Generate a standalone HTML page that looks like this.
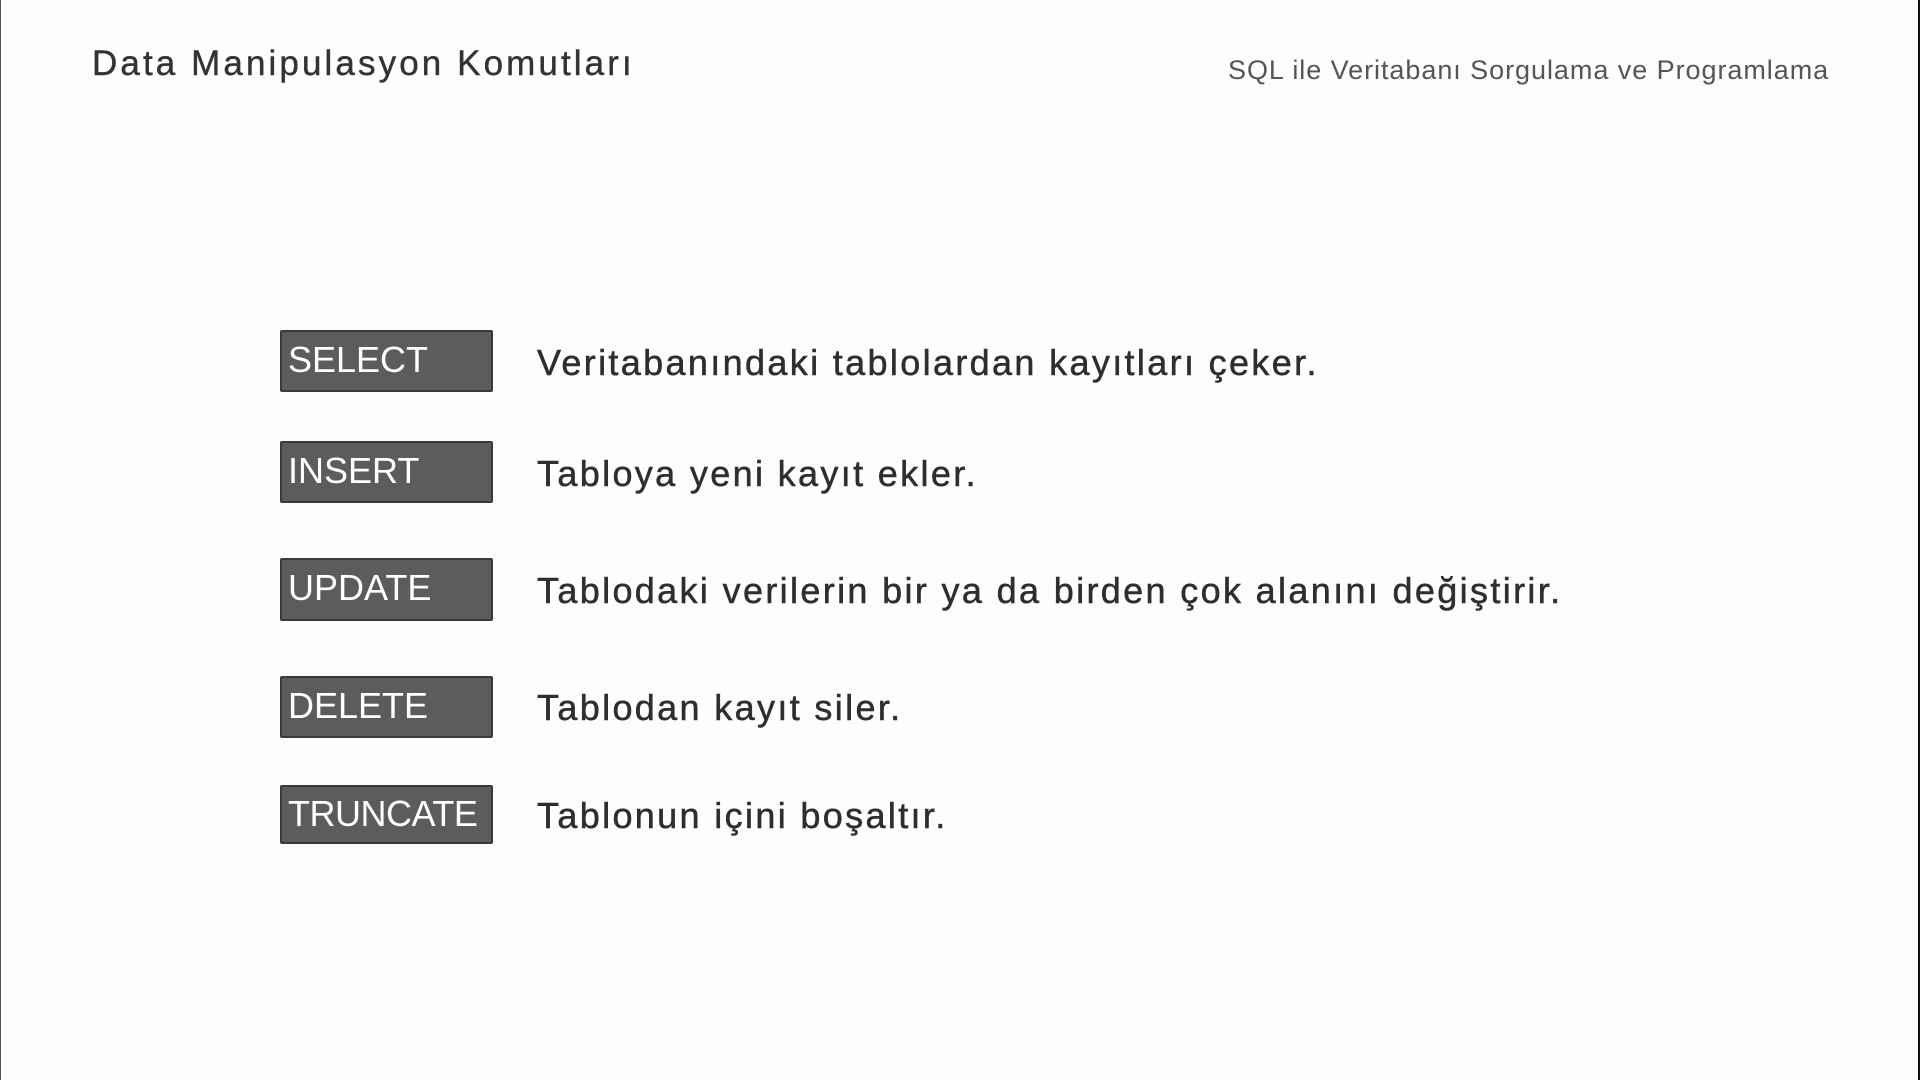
<!DOCTYPE html>
<html><head><meta charset="utf-8"><style>
html,body{margin:0;padding:0;width:1920px;height:1080px;background:#fdfdfd;overflow:hidden;font-family:"Liberation Sans",sans-serif;}
.l{position:absolute;left:0;top:0;width:1px;height:1080px;background:#555}
.r{position:absolute;right:0;top:0;width:2px;height:1080px;background:#111}
.t{position:absolute;left:92px;top:44px;font-size:35px;color:#333;letter-spacing:3.1px;-webkit-text-stroke:0.4px #333}
.s{position:absolute;left:1228px;top:55px;font-size:27px;color:#555;letter-spacing:0.95px}
.b{position:absolute;left:280px;width:213px;background:#5c5c5c;border:2px solid #3a3a3a;border-radius:2px;color:#fff;font-size:36px;line-height:1;box-sizing:border-box;padding-left:6px}
.d{position:absolute;left:537px;font-size:36px;color:#2e2e2e;-webkit-text-stroke:0.5px #2e2e2e;letter-spacing:2.35px}
</style></head><body>
<div class="l"></div><div class="r"></div>
<div class="t">Data Manipulasyon Komutları</div>
<div class="s">SQL ile Veritabanı Sorgulama ve Programlama</div>

<div class="b" style="top:330px;height:62px;padding-top:10px">SELECT</div>
<div class="d" style="top:342px">Veritabanındaki tablolardan kayıtları çeker.</div>

<div class="b" style="top:441px;height:62px;padding-top:10px">INSERT</div>
<div class="d" style="top:453px">Tabloya yeni kayıt ekler.</div>

<div class="b" style="top:558px;height:63px;padding-top:10px">UPDATE</div>
<div class="d" style="top:570px">Tablodaki verilerin bir ya da birden çok alanını değiştirir.</div>

<div class="b" style="top:676px;height:62px;padding-top:10px">DELETE</div>
<div class="d" style="top:687px">Tablodan kayıt siler.</div>

<div class="b" style="top:785px;height:59px;padding-top:9px;letter-spacing:-0.5px">TRUNCATE</div>
<div class="d" style="top:795px">Tablonun içini boşaltır.</div>
</body></html>
